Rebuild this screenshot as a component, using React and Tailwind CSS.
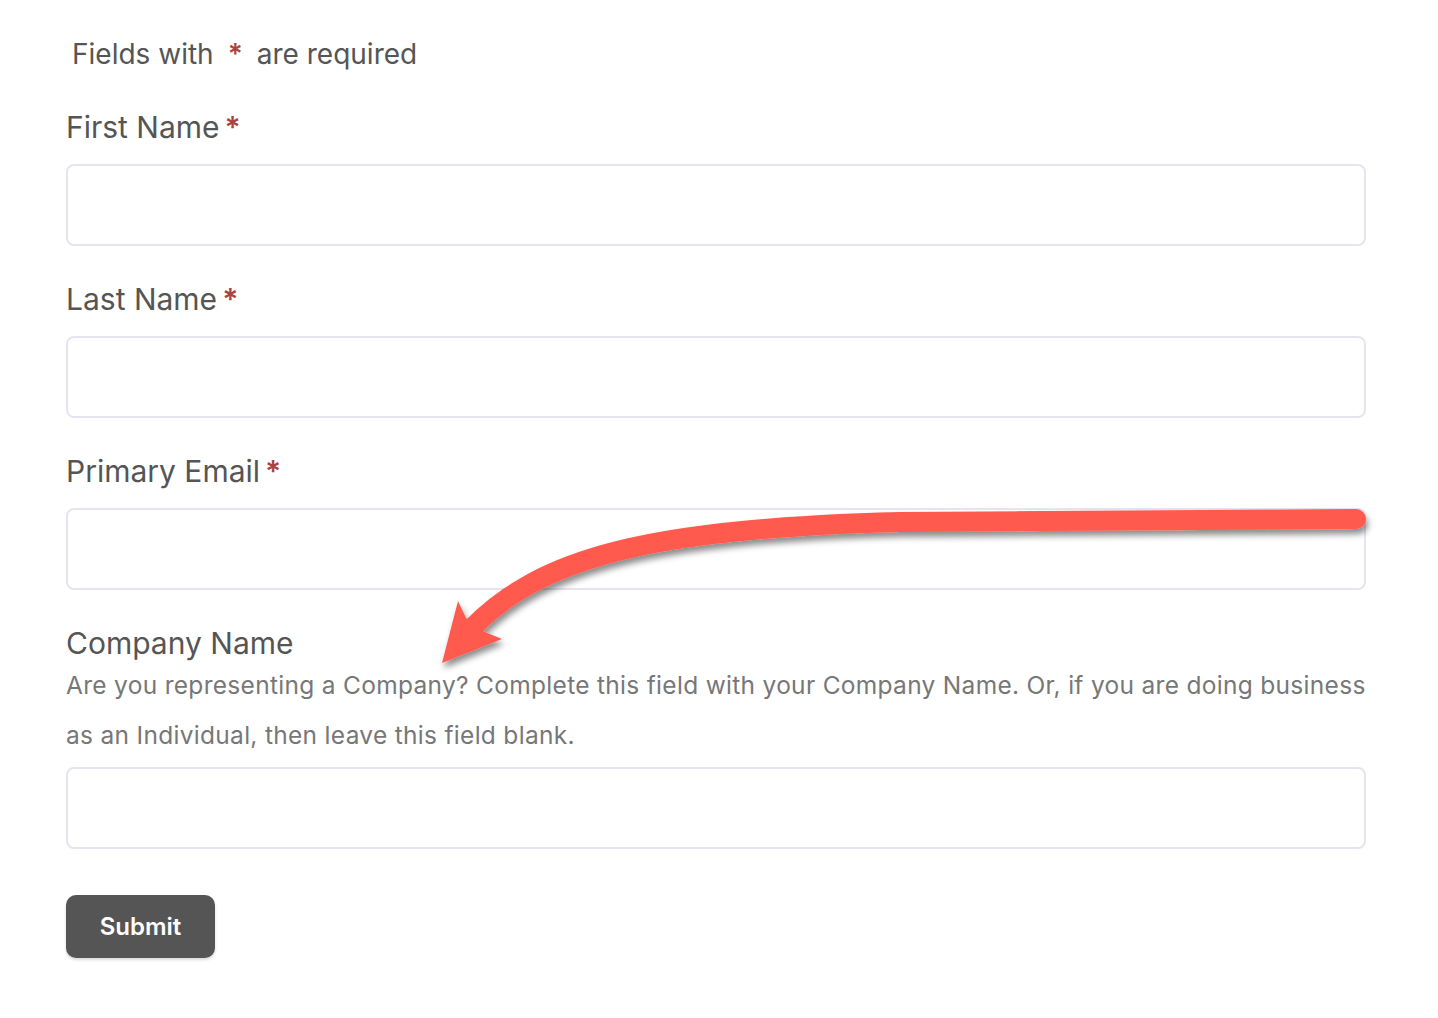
export default function App() {
  const font = { fontFamily: "Inter, 'Noto Sans', sans-serif" };
  const Field = ({ label, required, className = "" }) => (
    <div className={className}>
      <div className="flex items-center h-[36px] text-[30px] text-[#555555]">
        <span>{label}</span>
        {required && <span className="ml-[5px] text-[#a94442] font-semibold">*</span>}
      </div>
      <div className="mt-[19px] h-[82px] w-[1300px] rounded-[8px] border-2 border-[#e4e5f0] bg-white" />
    </div>
  );
  return (
    <div className="relative min-h-[1018px] w-[1438px] bg-white" style={font}>
      <div className="pl-[66px] pt-[36px]">
        <div className="h-[36px] flex items-center pl-[6px] text-[28px] text-[#555555]">
          <span>Fields with</span>
          <span className="mx-[14px] text-[#a94442] font-semibold">*</span>
          <span>are required</span>
        </div>
        <Field label="First Name" required className="mt-[37px]" />
        <Field label="Last Name" required className="mt-[35px]" />
        <Field label="Primary Email" required className="mt-[35px]" />
        <div className="mt-[35px]">
          <div className="flex items-center h-[36px] text-[30px] text-[#555555]">Company Name</div>
          <p className="w-[1300px] text-[24.5px] tracking-[0.3px] leading-[50px] text-[#777777] -mt-[1px]">
            Are you representing a Company? Complete this field with your Company Name. Or, if you are doing business as an Individual, then leave this field blank.
          </p>
          <div className="mt-[7px] h-[82px] w-[1300px] rounded-[8px] border-2 border-[#e4e5f0] bg-white" />
        </div>
        <button className="mt-[46px] h-[63px] w-[149px] rounded-[10px] bg-[#555555] text-white text-[24px] font-semibold shadow-[0_2px_3px_rgba(0,0,0,0.15)]">
          Submit
        </button>
      </div>
      <svg className="absolute left-0 top-0 pointer-events-none" width="1438" height="1018" viewBox="0 0 1438 1018">
        <defs>
          <filter id="sh" x="-10%" y="-10%" width="120%" height="130%">
            <feDropShadow dx="2" dy="5" stdDeviation="3" floodColor="#000" floodOpacity="0.45" />
          </filter>
        </defs>
        <g filter="url(#sh)">
          <path d="M 1356 519 L 900 522 C 650 528 540 558 472 628" stroke="#ff5a4e" strokeWidth="20" fill="none" strokeLinecap="round" />
          <polygon points="442,663 458,601 466,618 480,630 502,639" fill="#ff5a4e" />
        </g>
      </svg>
    </div>
  );
}
